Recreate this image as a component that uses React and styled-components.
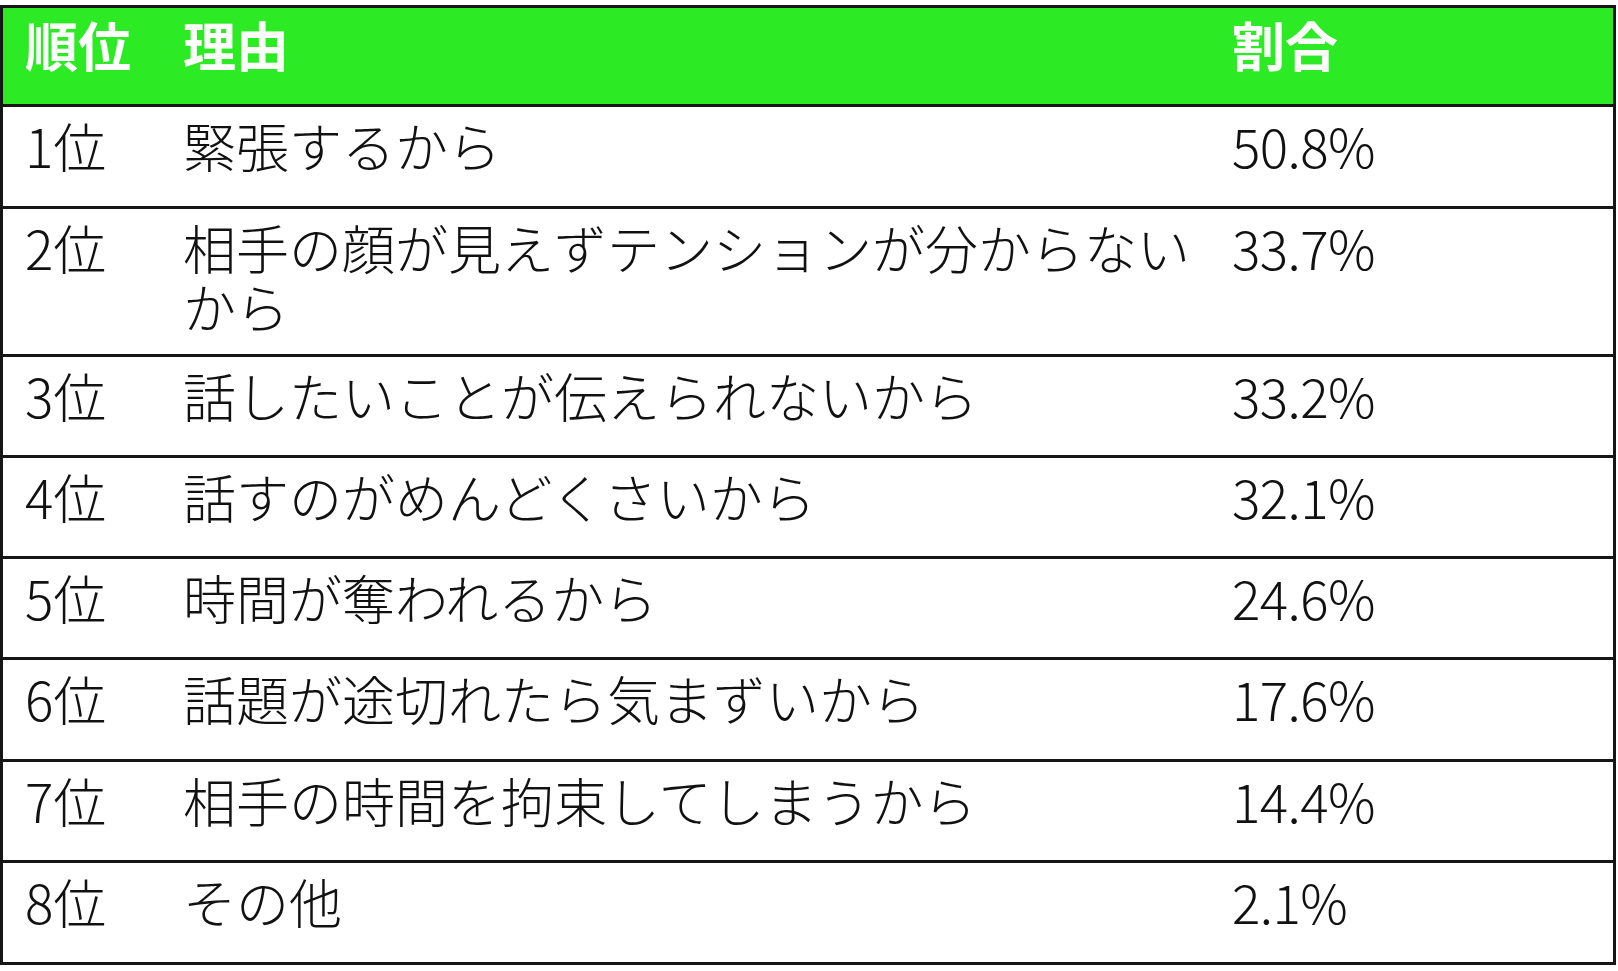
import React from "react";
import styled, { createGlobalStyle } from "styled-components";

const Global = createGlobalStyle`
  html, body { margin: 0; padding: 0; background: #ffffff; }
  body { font-family: "Noto Sans CJK JP", "Noto Sans", sans-serif; color: #111; }
`;

const Page = styled.div`
  padding-top: 5px;
  width: 1616px;
`;

const Table = styled.div`
  border: 3px solid #161616;
  display: flex;
  flex-direction: column;
  background: #fff;
`;

const Row = styled.div`
  display: grid;
  grid-template-columns: 158px 1049px 1fr;
  padding-left: 22px;
  box-sizing: border-box;
  height: ${(p) => p.$h}px;
  border-top: ${(p) => (p.$first ? "none" : "3px solid #161616")};
  background: ${(p) => (p.$head ? "#2ceb25" : "#ffffff")};
  color: ${(p) => (p.$head ? "#ffffff" : "#111111")};
  font-weight: ${(p) => (p.$head ? 700 : 300)};
  font-size: 53px;
  line-height: 59px;
  padding-top: ${(p) => (p.$head ? 7 : 9)}px;
`;

const Cell = styled.div`
  padding-right: ${(p) => (p.$wrap ? 34 : 0)}px;
  white-space: ${(p) => (p.$wrap ? "normal" : "nowrap")};
  letter-spacing: ${(p) => (p.$num ? "-0.6px" : "0")};
`;

const rows = [
  ["1位", "緊張するから", "50.8%", 99],
  ["2位", "相手の顔が見えずテンションが分からないから", "33.7%", 145],
  ["3位", "話したいことが伝えられないから", "33.2%", 98],
  ["4位", "話すのがめんどくさいから", "32.1%", 98],
  ["5位", "時間が奪われるから", "24.6%", 98],
  ["6位", "話題が途切れたら気まずいから", "17.6%", 99],
  ["7位", "相手の時間を拘束してしまうから", "14.4%", 98],
  ["8位", "その他", "2.1%", 99],
];

export default function App() {
  return (
    <Page>
      <Global />
      <Table>
        <Row $head $first $h={96}>
          <Cell>順位</Cell>
          <Cell $wrap>理由</Cell>
          <Cell>割合</Cell>
        </Row>
        {rows.map(([rank, reason, pct, h]) => (
          <Row key={rank} $h={h + 3}>
            <Cell>{rank}</Cell>
            <Cell $wrap>{reason}</Cell>
            <Cell $num>{pct}</Cell>
          </Row>
        ))}
      </Table>
    </Page>
  );
}
